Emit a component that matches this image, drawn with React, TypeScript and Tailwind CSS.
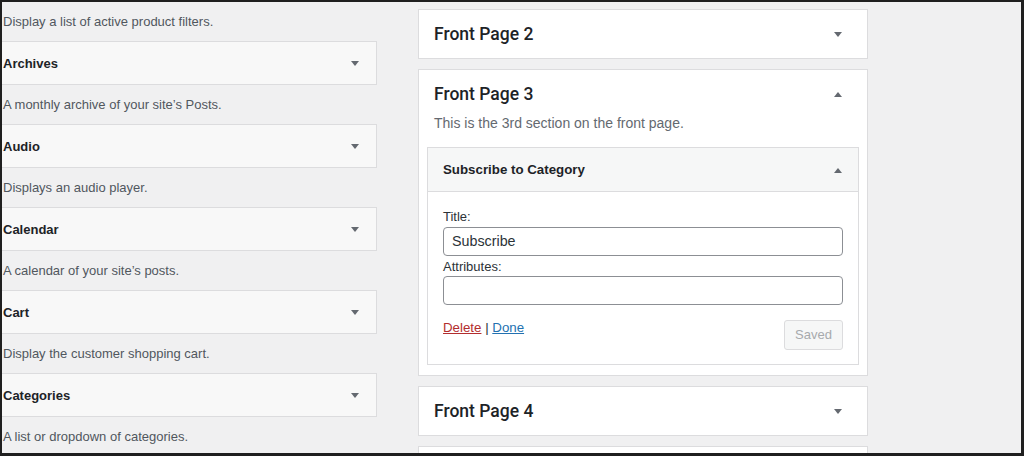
import React from 'react';

const body = { fontFamily: '"Liberation Sans", Arial, sans-serif' };
const heading = { fontFamily: 'Roboto, "Liberation Sans", Arial, sans-serif' };

const Arrow = ({ up = false }: { up?: boolean }) => (
  <svg width="8" height="5" viewBox="0 0 8 5" className="shrink-0">
    {up ? <polygon points="0,5 8,5 4,0" fill="#646970" /> : <polygon points="0,0 8,0 4,5" fill="#646970" />}
  </svg>
);

const available = [
  { name: 'Archives', desc: 'A monthly archive of your site’s Posts.' },
  { name: 'Audio', desc: 'Displays an audio player.' },
  { name: 'Calendar', desc: 'A calendar of your site’s posts.' },
  { name: 'Cart', desc: 'Display the customer shopping cart.' },
  { name: 'Categories', desc: 'A list or dropdown of categories.' },
];

const Desc = ({ text }: { text: string }) => (
  <div className="h-[39px] shrink-0 flex items-center pl-[1px] text-[13px] text-[#50575e]">{text}</div>
);

const SidebarBox = ({ title }: { title?: string }) => (
  <div className="h-[50px] shrink-0 bg-white border border-[#dcdcde] flex items-center justify-between pl-[15px] pr-[25px]">
    {title && (
      <>
        <span className="text-[17.5px] font-medium text-[#1d2327]" style={heading}>{title}</span>
        <Arrow />
      </>
    )}
  </div>
);

export default function App() {
  return (
    <div
      className="w-[1024px] h-[456px] overflow-hidden bg-[#f0f0f1] border-t-2 border-l-2 border-r-[3px] border-b-[3px] border-[#1f1f1f] flex"
      style={body}
    >
      {/* available widgets */}
      <div className="w-[375px] shrink-0 flex flex-col">
        <Desc text="Display a list of active product filters." />
        {available.map((w) => (
          <React.Fragment key={w.name}>
            <div className="h-[44px] shrink-0 border border-l-0 border-[#dcdcde] bg-[#f8f8f8] flex items-center justify-between pl-[1px] pr-[17px] pt-[1px]">
              <span className="text-[13px] font-bold text-[#1d2327]">{w.name}</span>
              <Arrow />
            </div>
            <Desc text={w.desc} />
          </React.Fragment>
        ))}
      </div>

      {/* sidebars */}
      <div className="w-[450px] shrink-0 ml-[41px] pt-[7px] flex flex-col gap-[10px]">
        <SidebarBox title="Front Page 2" />

        <div className="shrink-0 bg-white border border-[#dcdcde] flex flex-col">
          <div className="flex items-center justify-between pl-[15px] pr-[25px] pt-[13px]">
            <span className="text-[17.5px] leading-[22px] font-medium text-[#1d2327]" style={heading}>Front Page 3</span>
            <Arrow up />
          </div>
          <div className="pl-[15px] mt-[9px] text-[14px] leading-[18px] text-[#646970]">
            This is the 3rd section on the front page.
          </div>

          <div className="mx-[8px] mt-[15px] mb-[10px] border border-[#dcdcde] bg-white">
            <div className="h-[44px] bg-[#f6f7f7] border-b border-[#dcdcde] flex items-center justify-between pl-[15px] pr-[16px] pt-[1px]">
              <span className="text-[13.3px] font-bold text-[#1d2327]">Subscribe to Category</span>
              <Arrow up />
            </div>
            <div className="px-[15px] pt-[16px] pb-[14px] flex flex-col">
              <label className="text-[13px] leading-[18px] text-[#2c3338]">Title:</label>
              <div className="mt-[1px] h-[29px] border border-[#8c8f94] rounded-[4px] bg-white flex items-center px-[8px] text-[14.3px] text-[#2c3338]">
                Subscribe
              </div>
              <label className="mt-[2px] text-[13px] leading-[18px] text-[#2c3338]">Attributes:</label>
              <div className="h-[29px] border border-[#8c8f94] rounded-[4px] bg-white" />
              <div className="mt-[14px] flex items-start justify-between">
                <div className="text-[13.3px] leading-[18px] text-[#2c3338]">
                  <span className="text-[#b32d2e] underline">Delete</span>
                  <span> | </span>
                  <span className="text-[#2271b1] underline">Done</span>
                </div>
                <div className="mt-[1px] w-[59px] h-[30px] border border-[#dcdcde] rounded-[3px] bg-[#f6f7f7] flex items-center justify-center text-[13px] text-[#a7aaad]">
                  Saved
                </div>
              </div>
            </div>
          </div>
        </div>

        <SidebarBox title="Front Page 4" />
        <SidebarBox />
      </div>
    </div>
  );
}
